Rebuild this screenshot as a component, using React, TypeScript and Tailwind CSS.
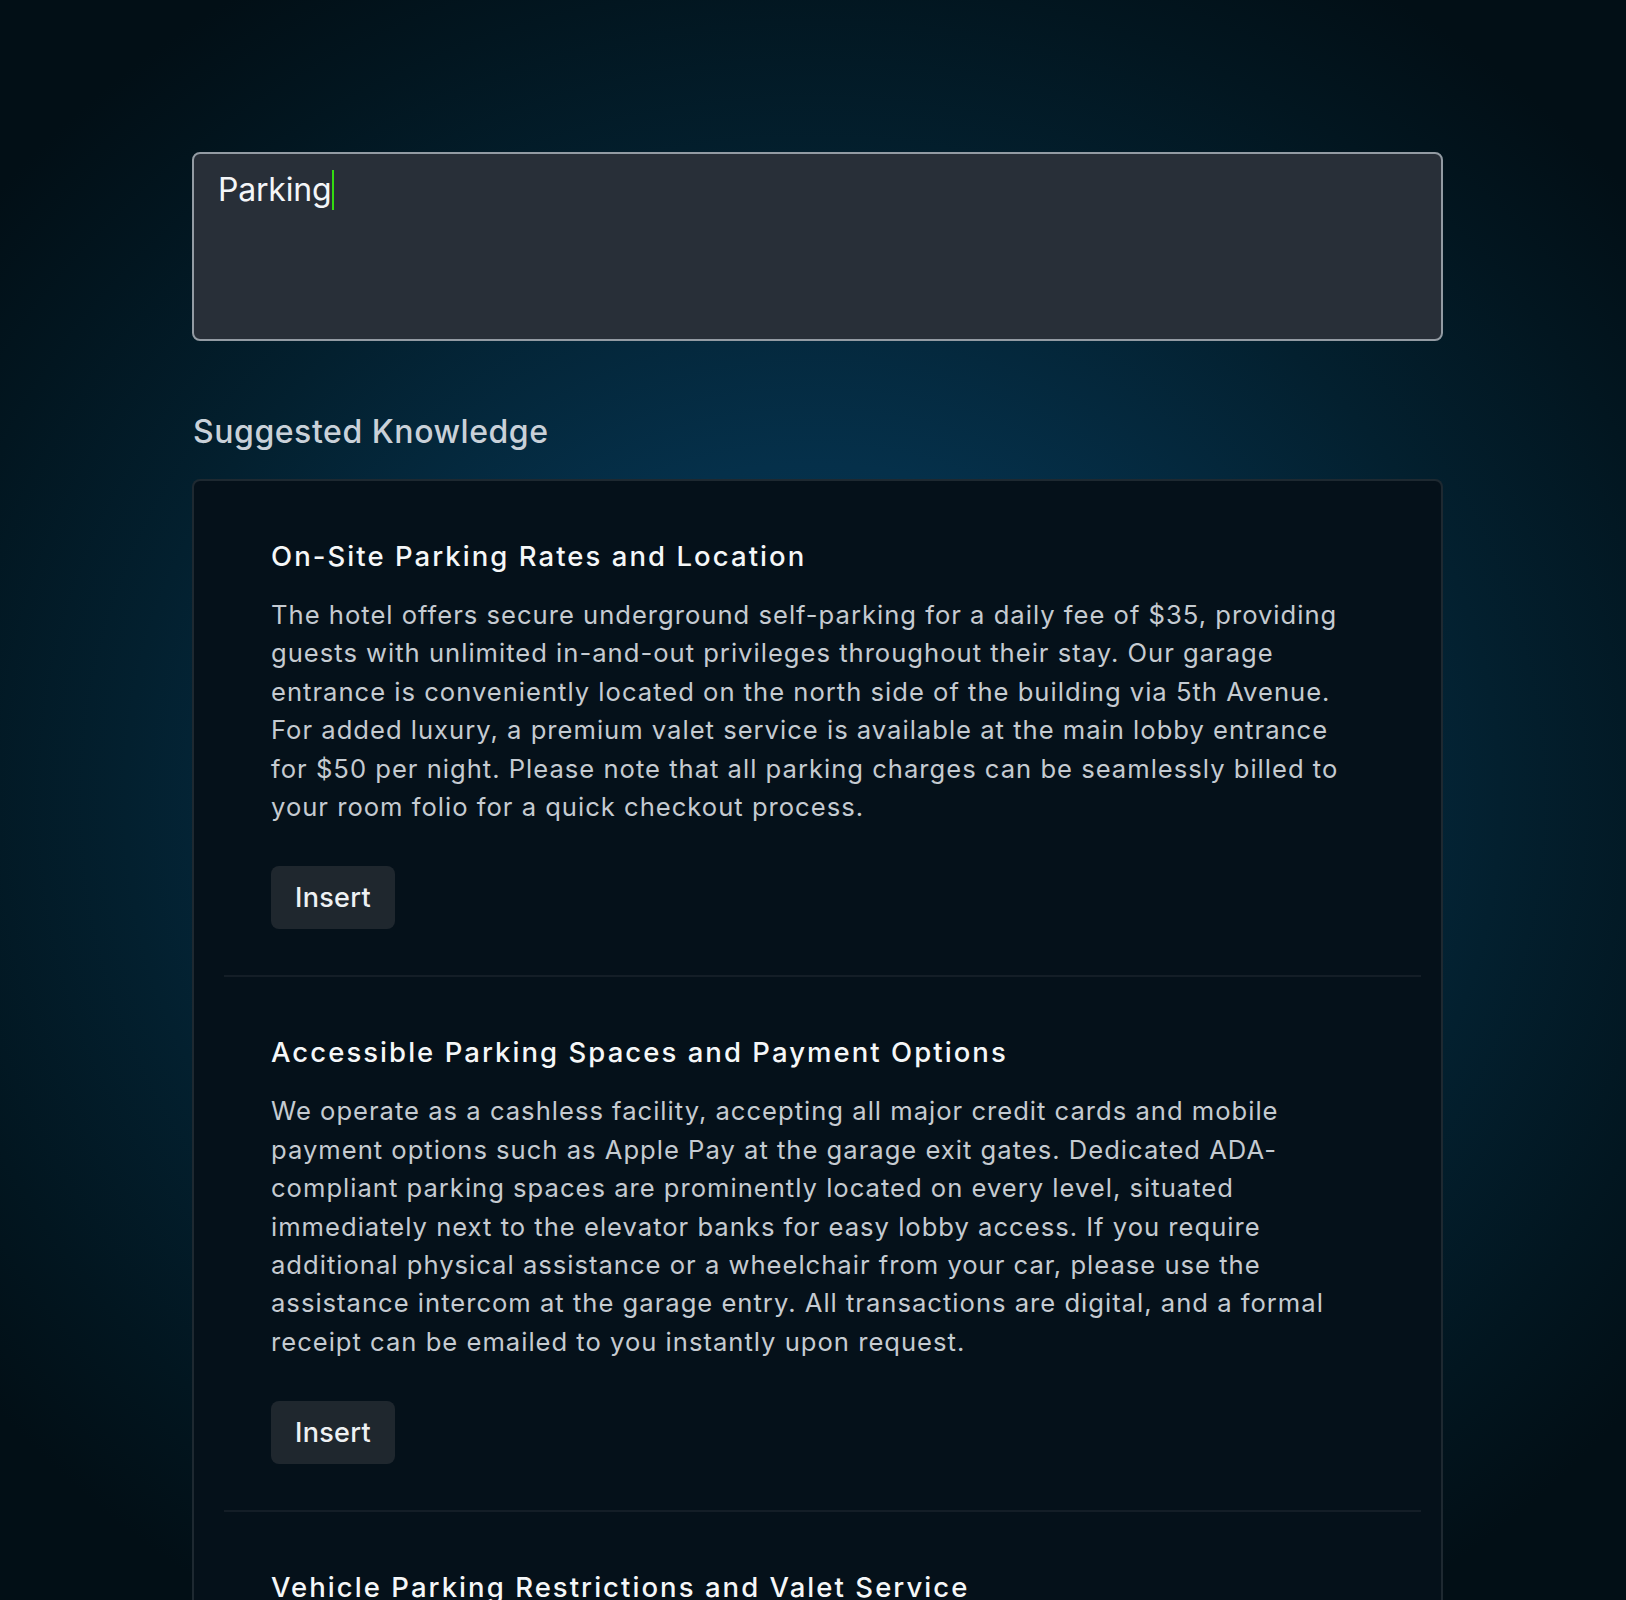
import React from "react";

const items = [
  {
    title: "On-Site Parking Rates and Location",
    body: "The hotel offers secure underground self-parking for a daily fee of $35, providing guests with unlimited in-and-out privileges throughout their stay. Our garage entrance is conveniently located on the north side of the building via 5th Avenue. For added luxury, a premium valet service is available at the main lobby entrance for $50 per night. Please note that all parking charges can be seamlessly billed to your room folio for a quick checkout process.",
  },
  {
    title: "Accessible Parking Spaces and Payment Options",
    body: "We operate as a cashless facility, accepting all major credit cards and mobile payment options such as Apple Pay at the garage exit gates. Dedicated ADA-compliant parking spaces are prominently located on every level, situated immediately next to the elevator banks for easy lobby access. If you require additional physical assistance or a wheelchair from your car, please use the assistance intercom at the garage entry. All transactions are digital, and a formal receipt can be emailed to you instantly upon request.",
  },
  {
    title: "Vehicle Parking Restrictions and Valet Service",
    body: "Oversized vehicles, including trucks, RVs and trailers, cannot be accommodated in the underground garage due to a height clearance limit. Our valet team can arrange nearby off-site parking for larger vehicles upon request at the front desk.",
  },
];

export default function App() {
  return (
    <div className="h-[1600px] overflow-hidden bg-[radial-gradient(ellipse_65%_60%_at_50%_50%,#073a58_0%,#05304a_35%,#03202f_65%,#021620_85%,#020f16_100%)] font-['Inter','Noto_Sans',sans-serif]">
      <div className="ml-[192px] w-[1251px] pt-[152px]">
        <div className="h-[189px] rounded-lg border-2 border-[#939ba3] bg-[#282f38] px-[24px] pt-[12px] text-[32px] leading-[48px] tracking-[-0.2px] text-[#f4f6f8]">
          Parking
          <span className="ml-[1px] mt-[4px] inline-block h-[40px] w-[2px] bg-[#33dd11] align-top" />
        </div>

        <h2 className="mt-[67px] pl-[1px] text-[32px] font-medium leading-[48px] tracking-[0.55px] text-[#c9d1d9]">
          Suggested Knowledge
        </h2>

        <div className="mt-[23px] rounded-lg border-2 border-white/10 bg-[#05111a] pl-[30px] pr-[20px]">
          {items.map((it) => (
            <div
              key={it.title}
              className="border-b-2 border-[#141e27] pb-[46px] pl-[47px] pr-[57px] pt-[55px]"
            >
              <h3 className="text-[27.5px] font-medium leading-[40px] tracking-[2.05px] text-[#f5f7f8]">
                {it.title}
              </h3>
              <p className="mt-[20px] text-[25.6px] leading-[38.4px] tracking-[1px] text-[#c5cbd1]">
                {it.body}
              </p>
              <button className="mt-[40px] h-[63px] rounded-lg bg-[#1f272e] px-[24px] text-[27px] font-medium tracking-[0.3px] text-[#eef1f3]">
                Insert
              </button>
            </div>
          ))}
        </div>
      </div>
    </div>
  );
}
